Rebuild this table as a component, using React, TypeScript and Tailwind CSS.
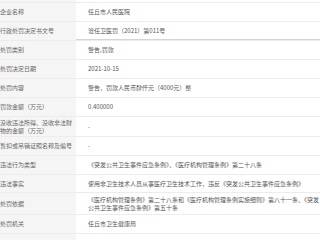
const rows: { label: string; value: string; dark?: boolean; h?: string }[] = [
    { label: '企业名称', value: '任丘市人民医院' },
    { label: '行政处罚决定书文号', value: '沧任卫医罚（2021）第011号', dark: true },
    { label: '处罚类别', value: '警告,罚款' },
    { label: '处罚决定日期', value: '2021-10-15' },
    { label: '处罚内容', value: '警告，罚款人民币肆仟元（4000元）整' },
    { label: '罚款金额（万元）', value: '0.400000' },
    { label: '没收违法所得、没收非法财物的金额（万元）', value: '-', h: 'h-[20px]' },
    { label: '暂扣或吊销证照名称及编号', value: '-' },
    { label: '违法行为类型', value: '《突发公共卫生事件应急条例》、《医疗机构管理条例》第二十八条' },
    { label: '违法事实', value: '使用非卫生技术人员从事医疗卫生技术工作，违反《突发公共卫生事件应急条例》', h: 'h-[18px]' },
    {
        label: '处罚依据',
        value: '《医疗机构管理条例》第二十八条和《医疗机构管理条例实施细则》第八十一条、《突发公共卫生事件应急条例》第五十条',
        h: 'h-[22px]',
    },
    { label: '处罚机关', value: '任丘市卫生健康局' },
];

const App = () => {
    return (
        <div
            className="w-[320px] h-[240px] overflow-hidden bg-white text-[6px] leading-[8px] text-[#666]"
            style={{ fontFamily: '"Noto Sans CJK SC", "Noto Sans", sans-serif' }}
        >
            <div className="w-[330px]">
                {/* row cut off at the top */}
                <div className="flex h-[3px] border-b border-[#ececec]">
                    <div className="w-[76px] bg-[#f5f5f5]"></div>
                    <div className="flex-1"></div>
                </div>

                {rows.map((row) => (
                    <div key={row.label} className={`flex overflow-hidden border-b border-[#ececec] ${row.h ?? 'h-[19px]'}`}>
                        <div className="w-[76px] shrink-0 bg-[#f5f5f5] pr-[2px] flex items-center">
                            <span>{row.label}</span>
                        </div>
                        <div
                            className={`w-[248px] pl-[12px] flex items-center ${row.dark ? 'border-b border-[#d4d4d4]' : ''}`}
                        >
                            <span className="text-[#555]">{row.value}</span>
                        </div>
                    </div>
                ))}

                {/* row cut off at the bottom */}
                <div className="flex h-[10px]">
                    <div className="w-[76px] bg-[#f5f5f5]"></div>
                    <div className="flex-1"></div>
                </div>
            </div>
        </div>
    );
};

export default App;
